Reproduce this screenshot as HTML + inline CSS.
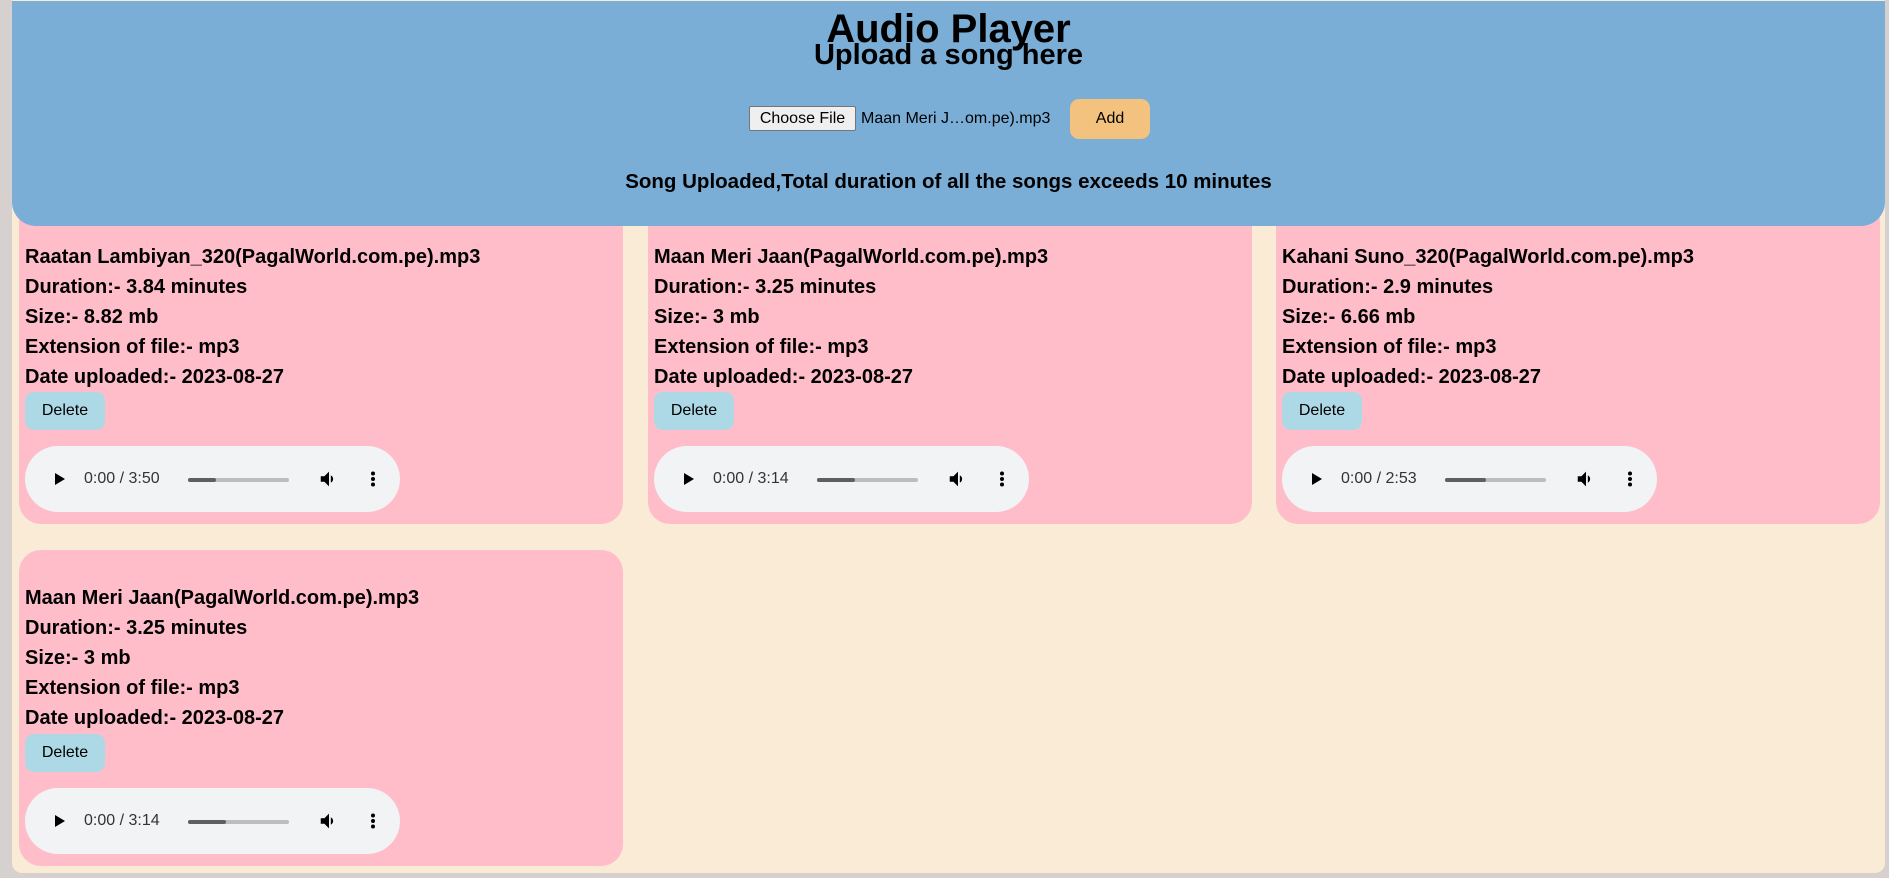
<!DOCTYPE html>
<html><head><meta charset="utf-8"><style>
*{margin:0;padding:0;box-sizing:border-box}
html,body{width:1889px;height:878px;overflow:hidden;background:#d6d0ce}
.page{position:absolute;left:12px;top:0;width:1873px;height:873px;background:#faebd7;border-radius:0 0 10px 10px}
.header{position:absolute;left:12px;top:1px;width:1873px;height:225px;background:#7aaed6;border-radius:0 0 24px 24px;z-index:2}
.c{position:absolute;left:0;width:100%;text-align:center;font-family:"Comic Sans MS","Liberation Sans",sans-serif;font-weight:bold;color:#000}
.card{position:absolute;width:604px;background:#ffbdca;border-radius:22px}
.t{position:absolute;left:6px;font-family:"Comic Sans MS","Liberation Sans",sans-serif;font-weight:bold;font-size:20px;color:#000;white-space:nowrap}
.del{position:absolute;left:6px;width:80px;height:38px;background:#add8e6;border-radius:9px;font:16px "Liberation Sans",sans-serif;text-align:center;line-height:38px;color:#000}
.au{position:absolute;left:6px;width:375px;height:66px;background:#f1f3f4;border-radius:33px;font:16px "Liberation Sans",sans-serif;color:#333}
.au .time{position:absolute;left:59px;top:24px}
.au .bar{position:absolute;left:163px;top:32px;width:101px;height:4px;background:#bdbdbd;border-radius:2px}
.au .bar i{display:block;width:28px;height:4px;background:#5f5f5f;border-radius:2px}
.au svg{position:absolute}
</style></head><body>
<div class="page"></div>
<div class="header">
<div class="c" style="top:5px;font-size:40px;line-height:46px">Audio Player</div>
<div class="c" style="top:37px;font-size:29px;line-height:34px">Upload a song here</div>
<div style="position:absolute;left:737px;top:105px;width:107px;height:25px;background:#efefef;border:1px solid #767676;border-radius:2px;font:16px 'Liberation Sans',sans-serif;text-align:center;line-height:23px">Choose File</div>
<div style="position:absolute;left:849px;top:106px;font:16px 'Liberation Sans',sans-serif;line-height:23px">Maan Meri J…om.pe).mp3</div>
<div style="position:absolute;left:1058px;top:98px;width:80px;height:40px;background:#f2c27e;border-radius:9px;font:16px 'Liberation Sans',sans-serif;text-align:center;line-height:40px">Add</div>
<div class="c" style="top:169px;font-size:20.5px;line-height:24px">Song Uploaded,Total duration of all the songs exceeds 10 minutes</div>
</div>

<div class="card" style="left:19px;top:200px;height:324px"></div>
<div class="card" style="left:648px;top:200px;height:324px"></div>
<div class="card" style="left:1276px;top:200px;height:324px"></div>
<div class="card" style="left:19px;top:550px;height:316px"></div>

<div style="position:absolute;left:19px;top:0;z-index:3">
 <div class="t" style="top:246px">Raatan Lambiyan_320(PagalWorld.com.pe).mp3</div>
 <div class="t" style="top:276px">Duration:- 3.84 minutes</div>
 <div class="t" style="top:306px">Size:- 8.82 mb</div>
 <div class="t" style="top:336px">Extension of file:- mp3</div>
 <div class="t" style="top:366px">Date uploaded:- 2023-08-27</div>
 <div class="del" style="top:392px">Delete</div>
 <div class="au" style="top:446px"><svg style="left:24px;top:23px" width="20" height="20" viewBox="0 0 20 20"><path d="M6 4v12l10-6z"/></svg><span class="time">0:00 / 3:50</span><div class="bar"><i></i></div><svg style="left:293px;top:22px" width="22" height="22" viewBox="0 0 24 24"><path d="M3 9v6h4l5 5V4L7 9H3zm13.5 3A4.5 4.5 0 0 0 14 8v8a4.5 4.5 0 0 0 2.5-4z"/></svg><svg style="left:338px;top:23px" width="20" height="20" viewBox="0 0 20 20"><circle cx="10" cy="4.5" r="2"/><circle cx="10" cy="10" r="2"/><circle cx="10" cy="15.5" r="2"/></svg></div>
</div>
<div style="position:absolute;left:648px;top:0;z-index:3">
 <div class="t" style="top:246px">Maan Meri Jaan(PagalWorld.com.pe).mp3</div>
 <div class="t" style="top:276px">Duration:- 3.25 minutes</div>
 <div class="t" style="top:306px">Size:- 3 mb</div>
 <div class="t" style="top:336px">Extension of file:- mp3</div>
 <div class="t" style="top:366px">Date uploaded:- 2023-08-27</div>
 <div class="del" style="top:392px">Delete</div>
 <div class="au" style="top:446px"><svg style="left:24px;top:23px" width="20" height="20" viewBox="0 0 20 20"><path d="M6 4v12l10-6z"/></svg><span class="time">0:00 / 3:14</span><div class="bar"><i style="width:38px"></i></div><svg style="left:293px;top:22px" width="22" height="22" viewBox="0 0 24 24"><path d="M3 9v6h4l5 5V4L7 9H3zm13.5 3A4.5 4.5 0 0 0 14 8v8a4.5 4.5 0 0 0 2.5-4z"/></svg><svg style="left:338px;top:23px" width="20" height="20" viewBox="0 0 20 20"><circle cx="10" cy="4.5" r="2"/><circle cx="10" cy="10" r="2"/><circle cx="10" cy="15.5" r="2"/></svg></div>
</div>
<div style="position:absolute;left:1276px;top:0;z-index:3">
 <div class="t" style="top:246px">Kahani Suno_320(PagalWorld.com.pe).mp3</div>
 <div class="t" style="top:276px">Duration:- 2.9 minutes</div>
 <div class="t" style="top:306px">Size:- 6.66 mb</div>
 <div class="t" style="top:336px">Extension of file:- mp3</div>
 <div class="t" style="top:366px">Date uploaded:- 2023-08-27</div>
 <div class="del" style="top:392px">Delete</div>
 <div class="au" style="top:446px"><svg style="left:24px;top:23px" width="20" height="20" viewBox="0 0 20 20"><path d="M6 4v12l10-6z"/></svg><span class="time">0:00 / 2:53</span><div class="bar"><i style="width:41px"></i></div><svg style="left:293px;top:22px" width="22" height="22" viewBox="0 0 24 24"><path d="M3 9v6h4l5 5V4L7 9H3zm13.5 3A4.5 4.5 0 0 0 14 8v8a4.5 4.5 0 0 0 2.5-4z"/></svg><svg style="left:338px;top:23px" width="20" height="20" viewBox="0 0 20 20"><circle cx="10" cy="4.5" r="2"/><circle cx="10" cy="10" r="2"/><circle cx="10" cy="15.5" r="2"/></svg></div>
</div>
<div style="position:absolute;left:19px;top:0;z-index:3">
 <div class="t" style="top:587px">Maan Meri Jaan(PagalWorld.com.pe).mp3</div>
 <div class="t" style="top:617px">Duration:- 3.25 minutes</div>
 <div class="t" style="top:647px">Size:- 3 mb</div>
 <div class="t" style="top:677px">Extension of file:- mp3</div>
 <div class="t" style="top:707px">Date uploaded:- 2023-08-27</div>
 <div class="del" style="top:734px">Delete</div>
 <div class="au" style="top:788px"><svg style="left:24px;top:23px" width="20" height="20" viewBox="0 0 20 20"><path d="M6 4v12l10-6z"/></svg><span class="time">0:00 / 3:14</span><div class="bar"><i style="width:38px"></i></div><svg style="left:293px;top:22px" width="22" height="22" viewBox="0 0 24 24"><path d="M3 9v6h4l5 5V4L7 9H3zm13.5 3A4.5 4.5 0 0 0 14 8v8a4.5 4.5 0 0 0 2.5-4z"/></svg><svg style="left:338px;top:23px" width="20" height="20" viewBox="0 0 20 20"><circle cx="10" cy="4.5" r="2"/><circle cx="10" cy="10" r="2"/><circle cx="10" cy="15.5" r="2"/></svg></div>
</div>
</body></html>
